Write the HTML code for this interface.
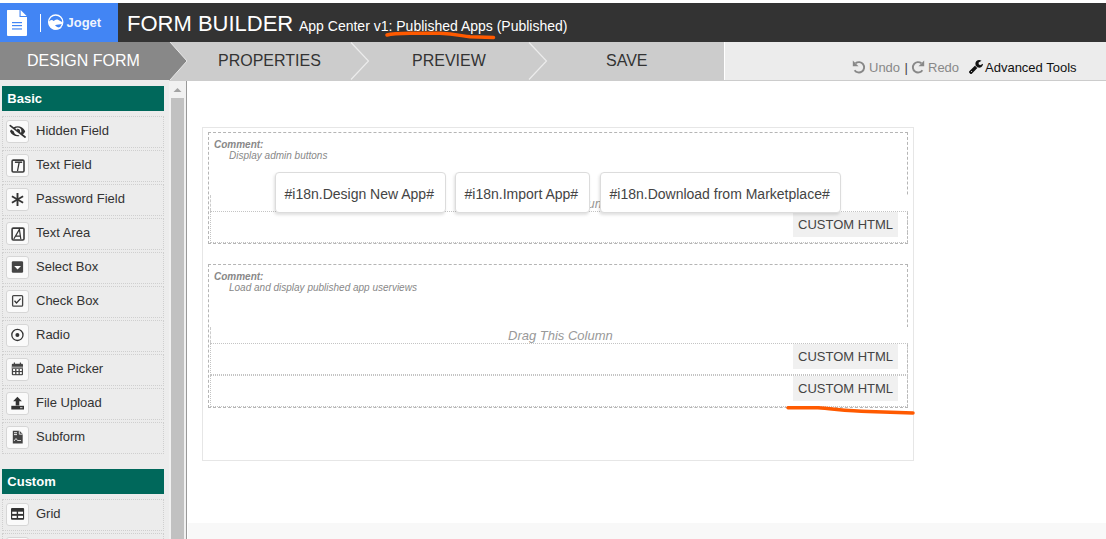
<!DOCTYPE html>
<html><head><meta charset="utf-8">
<style>
*{box-sizing:border-box;margin:0;padding:0}
html,body{width:1106px;height:539px;overflow:hidden;background:#fff;font-family:"Liberation Sans",sans-serif;color:#333}
.a{position:absolute}
.t{position:absolute;white-space:nowrap;line-height:1}
#hdr{left:0;top:3px;width:1106px;height:39px;background:#333}
#logo{left:0;top:3px;width:118px;height:39px;background:#4285f4}
#tabs{left:0;top:42px;width:1106px;height:39px;background:#ccc}
#right{left:725px;top:42px;width:381px;height:38px;background:#ececec}
#tabline{left:724px;top:80px;width:382px;height:1px;background:#ccc}
#pal{left:0;top:80px;width:169px;height:459px;background:#ececec}
#sb{left:169px;top:81px;width:17px;height:458px;background:#f1f1f1}
#thumb{left:171px;top:98px;width:13px;height:441px;background:#c1c1c1}
#cvline{left:186px;top:81px;width:1px;height:458px;background:#999}
#cvbot{left:188px;top:523px;width:918px;height:16px;background:#f8f8f8}
.hd{position:absolute;left:2px;width:162px;height:25px;background:#00685b;color:#fff;font-weight:bold;font-size:13px}
.hd span{position:absolute;left:5.3px;top:6px;line-height:1}
.it{position:absolute;left:2px;width:162px;height:32px;border:1px dotted #cfcfcf}
.ib{position:absolute;left:3px;top:3px;width:23px;height:23px;background:#fafafa;border:1px solid #d6d6d6;border-radius:3px}
.ib>svg{position:absolute;left:0;top:0}
.il{position:absolute;left:33px;top:7px;font-size:13px;line-height:1;color:#333}
#form{left:202px;top:127px;width:712px;height:334px;border:1px solid #e6e6e6}
.sec{position:absolute;border:1px dashed #b5b5b5}
.cm{position:absolute;font-size:10px;font-style:italic;color:#888;line-height:1}
.cm b{font-weight:bold}
.btn{position:absolute;top:172px;height:41px;background:#fff;border:1px solid #dcdcdc;border-radius:4px;box-shadow:-1px 2px 3px rgba(0,0,0,.12);font-size:14px;color:#444}
.btn span{position:absolute;left:9px;top:13.5px;line-height:1}
.el{position:absolute;border:1px dotted #c4c4c4}
.lbl{position:absolute;width:105px;height:25px;background:#f0f0f0;font-size:13px;color:#444}
.lbl span{position:absolute;left:5px;top:6px;line-height:1}
.cov{position:absolute;width:5px;background:#fff}
.cl{position:absolute;width:1px;border-left:1px dashed #ccc}
.drag{position:absolute;font-size:13px;font-style:italic;color:#999;line-height:1}
</style></head><body>
<div id="hdr" class="a"></div>
<div id="logo" class="a"></div>
<!-- doc icon -->
<svg class="a" style="left:0;top:0" width="118" height="42">
  <path d="M7.5 10 H19.5 V17 H27 V35 Q27 36 26 36 H8 Q7 36 7 35 V10.5 Q7 10 7.5 10 Z" fill="#fff"/>
  <path d="M20.6 10 L26.6 16 H20.6 Z" fill="#fff"/>
  <rect x="12" y="22" width="10" height="1.2" fill="#4285f4"/>
  <rect x="12" y="25" width="10" height="1.2" fill="#4285f4"/>
  <rect x="12" y="28.2" width="10" height="1.5" fill="#6a9ef5"/>
  <rect x="40" y="14" width="1" height="18" fill="#fff"/>
  <circle cx="55.7" cy="22.1" r="7.1" stroke="#fff" stroke-width="1.3" fill="none"/>
  <path d="M48.8 22.5 C49 20.5 50.8 19.6 52.5 20 C52.8 21.2 53.5 21.4 54.5 20.6 C55.5 19.8 56.8 19.2 58 19.8 L62.9 22.6 L62.9 23.9 C60 24.1 57 24.4 55 25.2 C56.5 27.2 59.5 27.9 62 27.3 C60.8 28.8 58.5 29.8 55.8 29.8 C51.8 29.8 48.8 26.6 48.8 22.5 Z" fill="#fff"/>
</svg>
<div class="t" style="left:66.5px;top:16.2px;font-size:13px;font-weight:bold;color:rgba(255,255,255,.93)">Joget</div>
<div class="t" style="left:127px;top:12.5px;font-size:22px;color:#fff">FORM BUILDER</div>
<div class="t" style="left:299px;top:19px;font-size:14px;color:#fff">App Center v1: Published Apps (Published)</div>

<div id="tabs" class="a"></div>
<svg class="a" style="left:0;top:42px" width="725" height="39">
  <path d="M0 0 H170 L187 19 L170 38 H0 Z" fill="#888"/>
  <path d="M170 0 L187 19 L170 38" stroke="#e8e8e8" stroke-width="1" fill="none"/>
  <path d="M351 0.5 L368.5 19 L351 37.5" stroke="#ececec" stroke-width="1.2" fill="none"/>
  <path d="M529 0.5 L546.5 19 L529 37.5" stroke="#ececec" stroke-width="1.2" fill="none"/>
  <rect x="724" y="0" width="1" height="38" fill="#fff"/>
</svg>
<div class="t" style="left:27px;top:52.5px;font-size:16px;color:#fff">DESIGN FORM</div>
<div class="t" style="left:218px;top:52.5px;font-size:16px;color:#333">PROPERTIES</div>
<div class="t" style="left:412px;top:52.5px;font-size:16px;color:#333">PREVIEW</div>
<div class="t" style="left:606px;top:52.5px;font-size:16px;color:#333">SAVE</div>
<div id="right" class="a"></div>
<div id="tabline" class="a"></div>
<svg class="a" style="left:852px;top:60px" width="14" height="14"><path d="M3.6 3.3 A5.2 5.2 0 1 1 2.6 10.2" stroke="#888" stroke-width="1.9" fill="none"/><path d="M0.8 0.6 V6.3 H6.5 Z" fill="#888"/></svg>
<div class="t" style="left:869px;top:61px;font-size:13px;color:#888">Undo</div>
<div class="t" style="left:904.5px;top:61px;font-size:13px;color:#444">|</div>
<svg class="a" style="left:910.5px;top:60px" width="14" height="14"><g transform="translate(14 0) scale(-1 1)"><path d="M3.6 3.3 A5.2 5.2 0 1 1 2.6 10.2" stroke="#888" stroke-width="1.9" fill="none"/><path d="M0.8 0.6 V6.3 H6.5 Z" fill="#888"/></g></svg>
<div class="t" style="left:928px;top:61px;font-size:13px;color:#888">Redo</div>
<svg class="a" style="left:969px;top:60px" width="14" height="14" viewBox="21 128 1641 1643">
  <path fill="#111" d="M384 1472q0-26-19-45t-45-19-45 19-19 45 19 45 45 19 45-19 19-45zm644-420L346 1734q-37 37-90 37-52 0-91-37L59 1626q-38-36-38-90 0-53 38-91l681-681q39 98 114.5 173.5T1028 1052zm634-435q0 39-23 106-47 134-164.5 217.5T1216 1024q-185 0-316.5-131.5T768 576t131.5-316.5T1216 128q58 0 121.5 16.5T1445 191q16 11 16 28t-16 28l-293 169v224l193 107q5-3 79-48.5t135.5-81T1630 582q15 0 23.5 10t8.5 25z"/>
</svg>
<div class="t" style="left:985px;top:61px;font-size:13px;color:#111">Advanced Tools</div>

<div id="pal" class="a"></div>
<div id="sb" class="a"></div>
<svg class="a" style="left:169px;top:81px" width="17" height="17"><path d="M4.5 11 L8.5 7 L12.5 11 Z" fill="#a3a3a3"/></svg>
<div id="thumb" class="a"></div>
<div id="cvline" class="a"></div>
<div id="cvbot" class="a"></div>

<div class="hd" style="top:86px"><span>Basic</span></div>
<div class="it" style="top:116px"><div class="ib"><svg width="22" height="22"><svg x="2.2" y="3.6" width="16.8" height="13.4" viewBox="0 0 640 512"><path fill="#333" d="M320 400c-75.85 0-137.25-58.71-142.9-133.11L72.2 185.82c-13.790 17.3-26.48 35.59-36.72 55.59a32.35 32.35 0 0 0 0 29.19C89.71 376.41 197.07 448 320 448c26.91 0 52.87-4 77.89-10.46L346 397.39a144.13 144.13 0 0 1-26 2.61zm313.82 58.1l-110.55-85.44a331.25 331.25 0 0 0 81.25-102.07 32.35 32.35 0 0 0 0-29.19C550.29 135.590 442.93 64 320 64a308.15 308.15 0 0 0-147.32 37.7L45.460 3.37A16 16 0 0 0 23 6.18L3.37 31.45A16 16 0 0 0 6.18 53.9l588.36 454.73a16 16 0 0 0 22.46-2.81l19.64-25.27a16 16 0 0 0-2.82-22.45zm-183.72-142l-39.3-30.38A94.75 94.75 0 0 0 416 256a94.76 94.76 0 0 0-121.31-92.21A47.65 47.65 0 0 1 304 192a46.640 46.64 0 0 1-1.54 10l-73.61-56.89A142.31 142.31 0 0 1 320 112a143.92 143.92 0 0 1 144 144c0 21.63-5.29 41.790-13.9 60.11z"/></svg></svg></div><div class="il">Hidden Field</div></div>
<div class="it" style="top:150px"><div class="ib"><svg width="22" height="22"><rect x="5.1" y="5.1" width="11.9" height="11.9" rx="1.2" fill="none" stroke="#3a3a3a" stroke-width="1.6"/><path d="M7.9 7.2 H15.2" stroke="#333" stroke-width="1.5"/><path d="M12.2 7.2 L10.5 16" stroke="#333" stroke-width="1.3"/></svg></div><div class="il">Text Field</div></div>
<div class="it" style="top:184px"><div class="ib"><svg width="22" height="22"><g stroke="#333" stroke-width="1.9"><path d="M10.5 4 V17"/><path d="M4.9 7.2 L16.1 13.8"/><path d="M4.9 13.8 L16.1 7.2"/></g></svg></div><div class="il">Password Field</div></div>
<div class="it" style="top:218px"><div class="ib"><svg width="22" height="22"><rect x="5.1" y="5.1" width="11.9" height="11.9" rx="1.2" fill="none" stroke="#3a3a3a" stroke-width="1.6"/><path d="M6.8 16 L12.4 6.4 L13.8 16 M8.5 13.1 H13.4" stroke="#333" stroke-width="1.2" fill="none"/></svg></div><div class="il">Text Area</div></div>
<div class="it" style="top:252px"><div class="ib"><svg width="22" height="22"><rect x="4.8" y="4.3" width="11.3" height="11.4" rx="1.2" fill="#444"/><path d="M7.2 9 H14 L10.6 12.6 Z" fill="#fff"/></svg></div><div class="il">Select Box</div></div>
<div class="it" style="top:286px"><div class="ib"><svg width="22" height="22"><rect x="5.6" y="4.6" width="10" height="10.6" rx="1" fill="none" stroke="#444" stroke-width="1.3"/><path d="M7.5 9.8 L9.5 12 L13.6 7.6" stroke="#333" stroke-width="1.3" fill="none"/></svg></div><div class="il">Check Box</div></div>
<div class="it" style="top:320px"><div class="ib"><svg width="22" height="22"><circle cx="10.4" cy="9.9" r="5.6" fill="none" stroke="#333" stroke-width="1.3"/><circle cx="10.4" cy="9.9" r="2" fill="#333"/></svg></div><div class="il">Radio</div></div>
<div class="it" style="top:354px"><div class="ib"><svg width="22" height="22"><rect x="4.8" y="4.8" width="11.2" height="11.4" rx="1" fill="#444"/><rect x="4.8" y="7.5" width="11.2" height="2" fill="#999"/><rect x="6.8" y="3.5" width="1.2" height="2" fill="#444"/><rect x="12.8" y="3.5" width="1.2" height="2" fill="#444"/><g fill="#fff"><rect x="6.1" y="10" width="2" height="2"/><rect x="9.5" y="10" width="2" height="2"/><rect x="12.8" y="10" width="2" height="2"/><rect x="6.1" y="13.1" width="2" height="2"/><rect x="9.5" y="13.1" width="2" height="2"/><rect x="12.8" y="13.1" width="2" height="2"/></g></svg></div><div class="il">Date Picker</div></div>
<div class="it" style="top:388px"><div class="ib"><svg width="22" height="22"><path d="M10.4 3.8 L14.9 8.2 H12.3 V12.6 H8.7 V8.2 H6.1 Z" fill="#333"/><rect x="4.3" y="12.8" width="12.7" height="3.7" fill="#333"/><rect x="13" y="14.2" width="2.5" height="1" fill="#ccc"/></svg></div><div class="il">File Upload</div></div>
<div class="it" style="top:422px"><div class="ib"><svg width="22" height="22"><path d="M5.8 3.8 H12.5 L15.7 7 V16.5 H5.8 Z" fill="#444"/><path d="M12.3 3.8 V7.2 H15.7" fill="none" stroke="#fff" stroke-width="0.8"/><rect x="7" y="5.3" width="3" height="0.9" fill="#fff"/><rect x="7" y="7.2" width="3" height="0.9" fill="#fff"/><path d="M7 14 L9 11.5 L10.5 13.5 L14 13.5" stroke="#fff" stroke-width="0.8" fill="none"/></svg></div><div class="il">Subform</div></div>
<div class="hd" style="top:469px"><span>Custom</span></div>
<div class="it" style="top:499px"><div class="ib"><svg width="22" height="22"><rect x="4" y="4" width="13.1" height="11.7" rx="1" fill="#333"/><g fill="#fff"><rect x="5.2" y="7.7" width="4.5" height="2.2"/><rect x="11.1" y="7.7" width="4.9" height="2.2"/><rect x="5.2" y="11.8" width="4.5" height="2.2"/><rect x="11.1" y="11.8" width="4.9" height="2.2"/></g></svg></div><div class="il">Grid</div></div>
<div class="it" style="top:533px"><div class="ib"></div></div>

<div id="form" class="a"></div>
<!-- section 1 -->
<div class="sec" style="left:208px;top:132px;width:700px;height:112px"></div>
<div class="cm" style="left:214px;top:140px"><b>Comment:</b></div>
<div class="cm" style="left:229px;top:151px">Display admin buttons</div>
<div class="drag" style="left:508px;top:197px">Drag This Column</div>
<div class="el" style="left:210px;top:211px;width:698px;height:32px"></div>
<div class="cov" style="left:905px;top:195px;height:16px"></div><div class="cl" style="left:210px;top:195px;height:16px"></div><div class="lbl" style="left:793px;top:212px"><span>CUSTOM HTML</span></div>
<div class="btn" style="left:274.5px;width:171px"><span>#i18n.Design New App#</span></div>
<div class="btn" style="left:454.5px;width:135px"><span>#i18n.Import App#</span></div>
<div class="btn" style="left:599.5px;width:241px"><span>#i18n.Download from Marketplace#</span></div>

<!-- section 2 -->
<div class="sec" style="left:208px;top:264px;width:700px;height:144px"></div>
<div class="cm" style="left:214px;top:272px"><b>Comment:</b></div>
<div class="cm" style="left:229px;top:283px">Load and display published app userviews</div>
<div class="drag" style="left:508px;top:329px">Drag This Column</div>
<div class="el" style="left:210px;top:343px;width:698px;height:32px"></div>
<div class="cov" style="left:905px;top:327px;height:16px"></div><div class="cl" style="left:210px;top:327px;height:16px"></div><div class="lbl" style="left:793px;top:344px"><span>CUSTOM HTML</span></div>
<div class="el" style="left:210px;top:375px;width:698px;height:32px"></div>
<div class="lbl" style="left:793px;top:376px"><span>CUSTOM HTML</span></div>

<!-- annotations -->
<svg class="a" style="left:0;top:0;pointer-events:none" width="1106" height="539">
  <path d="M387 35 C392 33.5 398 33.3 410 33.3 L440 33.3 C455 34 462 36 470 36.8 L493.5 37.5" stroke="#ff5a00" stroke-width="3.5" fill="none" stroke-linecap="round"/>
  <path d="M788 407.7 L818 407.7 C835 409 850 411 868 411.5 L913 413" stroke="#ff5a00" stroke-width="3.5" fill="none" stroke-linecap="round"/>
</svg>
</body></html>
